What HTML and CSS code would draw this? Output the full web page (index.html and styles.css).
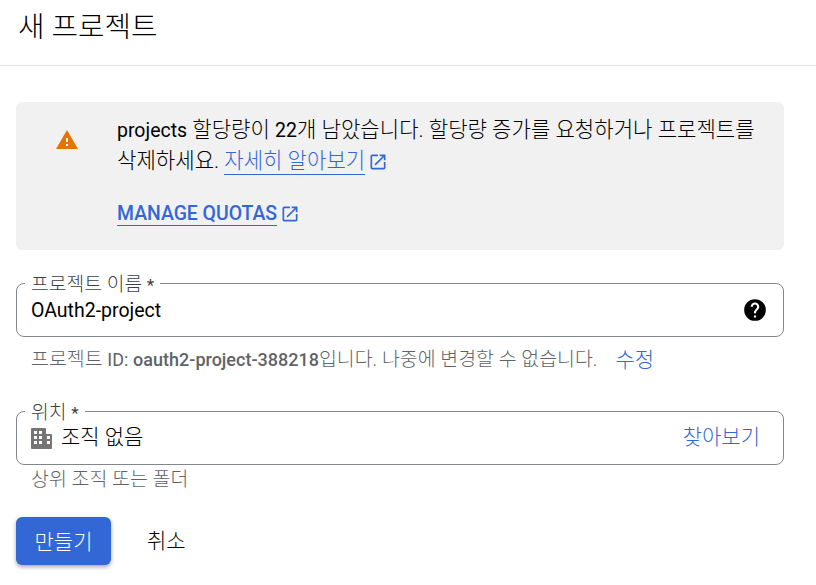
FILE: index.html
```html
<!DOCTYPE html>
<html lang="ko">
<head>
    <meta charset="UTF-8">
    <meta name="viewport" content="width=device-width, initial-scale=1.0">
    <title>새 프로젝트</title>
    <link rel="stylesheet" href="styles.css">
</head>
<body>
    <div class="page-header">
        <h1>새 프로젝트</h1>
    </div>
    <div class="form">
        <div class="alert">
            <div class="alert-icon">
                <svg width="24" height="24" viewBox="0 0 24 24"><path fill="#e37400" d="M1 21h22L12 2 1 21z"/><path fill="#fff" d="M13 18h-2v-2h2v2zm0-4h-2v-4h2v4z"/></svg>
            </div>
            <div class="alert-body">
                <p class="alert-text"><span class="en">projects</span> 할당량이 <span class="en">22</span>개 남았습니다. 할당량 증가를 요청하거나 프로젝트를<br>삭제하세요. <a class="link">자세히 알아보기</a><svg class="ext-icon" width="20" height="20" viewBox="0 0 24 24"><path fill="#3367d6" d="M19 19H5V5h7V3H5a2 2 0 0 0-2 2v14a2 2 0 0 0 2 2h14a2 2 0 0 0 2-2v-7h-2v7zM14 3v2h3.59l-9.83 9.83 1.41 1.41L19 6.41V10h2V3h-7z"/></svg></p>
                <p class="alert-action"><a class="link link-bold">MANAGE QUOTAS</a><svg class="ext-icon" width="20" height="20" viewBox="0 0 24 24"><path fill="#3367d6" d="M19 19H5V5h7V3H5a2 2 0 0 0-2 2v14a2 2 0 0 0 2 2h14a2 2 0 0 0 2-2v-7h-2v7zM14 3v2h3.59l-9.83 9.83 1.41 1.41L19 6.41V10h2V3h-7z"/></svg></p>
            </div>
        </div>

        <div class="field field-name">
            <span class="field-label">프로젝트 이름 <span class="star">*</span></span>
            <span class="field-value en">OAuth2-project</span>
            <svg class="help-icon" width="26" height="26" viewBox="0 0 24 24"><path fill="#000" d="M12 2a10 10 0 1 0 0 20 10 10 0 0 0 0-20zm1 17h-2v-2h2v2zm2.07-7.75-.9.92C13.45 12.9 13 13.5 13 15h-2v-.5c0-1.1.45-2.1 1.17-2.83l1.24-1.26c.37-.36.59-.86.59-1.41 0-1.1-.9-2-2-2s-2 .9-2 2H8c0-2.21 1.79-4 4-4s4 1.79 4 4c0 .88-.36 1.68-.93 2.25z"/></svg>
        </div>
        <div class="hint hint-name">
            <span>프로젝트 <span class="en-small">ID:</span> <b class="en-small">oauth2-project-388218</b>입니다. 나중에 변경할 수 없습니다.</span>
            <a class="action">수정</a>
        </div>

        <div class="field field-location">
            <span class="field-label">위치 <span class="star">*</span></span>
            <svg class="org-icon" width="21" height="21" viewBox="0 0 21 21"><path fill="#757575" fill-rule="evenodd" d="M1 0h13a1 1 0 0 1 1 1v5h5a1 1 0 0 1 1 1v13a1 1 0 0 1-1 1H1a1 1 0 0 1-1-1V1a1 1 0 0 1 1-1zM3 3v3h3V3H3zm5 0v3h3V3H8zM3 8v3h3V8H3zm5 0v3h3V8H8zm8 0v3h3V8h-3zM3 13v3h3v-3H3zm5 0v3h3v-3H8zm8 0v3h3v-3h-3z"/></svg>
            <span class="field-value">조직 없음</span>
            <a class="action">찾아보기</a>
        </div>
        <div class="hint hint-location">상위 조직 또는 폴더</div>

        <div class="buttons">
            <button class="btn-primary">만들기</button>
            <button class="btn-cancel">취소</button>
        </div>
    </div>
</body>
</html>
```

FILE: styles.css
```css
body {
    font-family: Roboto, "Noto Sans CJK KR", sans-serif;
    font-weight: 300;
    margin: 0;
    background: #fff;
    color: #000;
    height: 585px;
    overflow: hidden;
}
/* Hangul runs wider than Roboto in the original, so latin text gets its own size */
.en {
    font-size: 19.5px;
    font-weight: 400;
}
.en-small {
    font-size: 18px;
    font-weight: 400;
}
.page-header {
    height: 65px;
    border-bottom: 1px solid #e0e0e0;
    padding-left: 18px;
}
.page-header h1 {
    margin: 0;
    font-size: 28.8px;
    font-weight: 300;
    line-height: 54px;
}
.form {
    padding: 36px 32px 0 16px;
}
.alert {
    display: flex;
    height: 148px;
    box-sizing: border-box;
    background: #f1f1f1;
    border-radius: 6px;
    padding: 13px 24px 0 0;
}
.alert-icon {
    width: 101px;
    flex: none;
    padding: 13px 0 0 39px;
    box-sizing: border-box;
}
.alert-body {
    flex: 1;
}
.alert-text {
    margin: 0;
    font-size: 21.1px;
    line-height: 30px;
}
.alert-action {
    margin: 23px 0 0;
    line-height: 30px;
    font-size: 19.4px;
}
.link {
    color: #3367d6;
    border-bottom: 1px solid #3367d6;
    padding-bottom: 1px;
}
.link-bold {
    font-weight: 500;
    padding-bottom: 0;
}
.ext-icon {
    vertical-align: -4px;
    margin-left: 3px;
}
.field {
    position: relative;
    display: flex;
    align-items: center;
    height: 54px;
    box-sizing: border-box;
    border: 1px solid #80868b;
    border-radius: 8px;
    padding: 0 15px 0 14px;
}
.field-name {
    margin-top: 33px;
}
.field-location {
    margin-top: 37px;
    padding-right: 23px;
}
.field-label {
    position: absolute;
    top: -9px;
    left: 8px;
    padding: 0 6px;
    background: #fff;
    font-size: 19.3px;
    line-height: 20px;
    color: #3c4043;
}
.star {
    font-size: 17px;
    font-weight: 400;
}
.field-value {
    flex: 1;
    font-size: 21px;
}
.field-value.en {
    font-size: 19.5px;
}
.field-location .field-value,
.field-location .action {
    margin-bottom: 6px;
}
.org-icon {
    margin-right: 9px;
}
.action {
    color: #3367d6;
    font-size: 21px;
}
.hint {
    font-size: 19.45px;
    color: #5f6368;
    padding-left: 15px;
}
.hint-name {
    display: flex;
    gap: 18px;
    align-items: center;
    margin-top: 9px;
    line-height: 28px;
}
.hint b {
    font-weight: 500;
}
.hint-location {
    margin-top: 2px;
    line-height: 26px;
}
.buttons {
    display: flex;
    align-items: center;
    gap: 36px;
    margin-top: 24px;
}
.btn-primary {
    width: 95px;
    height: 48px;
    border: none;
    border-radius: 6px;
    background: #3367d6;
    color: #fff;
    font: inherit;
    font-size: 21px;
    padding-bottom: 4px;
    box-shadow: 0 2px 4px rgba(0,0,0,0.35);
}
.btn-cancel {
    border: none;
    background: none;
    padding: 0 0 4px;
    font: inherit;
    font-size: 21px;
    color: #000;
}
```
